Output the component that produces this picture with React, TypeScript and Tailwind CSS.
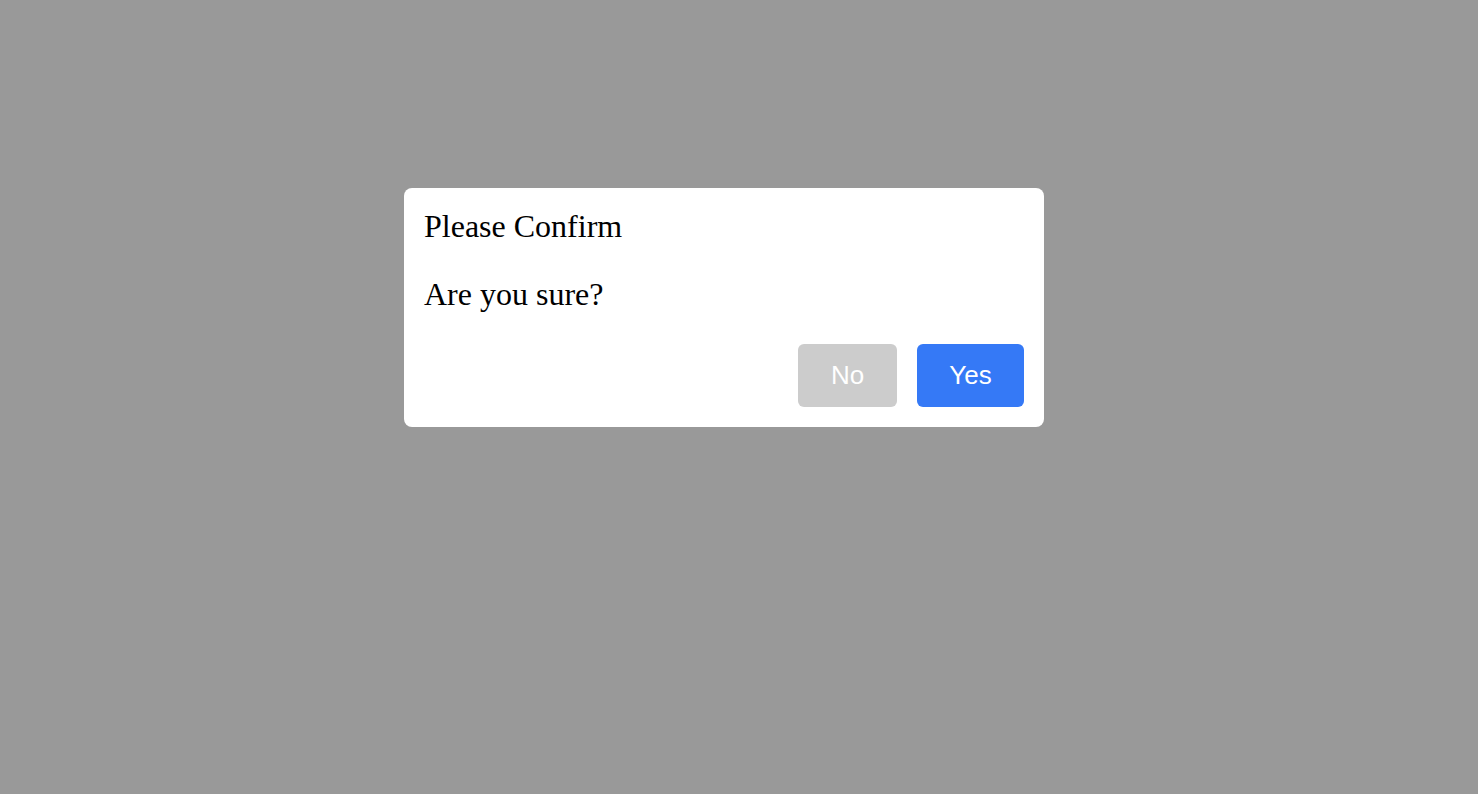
export default function App() {
  return (
    <div className="flex h-[794px] w-full items-start justify-center bg-[#999999] pr-[30px]">
      <div className="mt-[188px] flex w-[640px] flex-col rounded-lg bg-white p-5 font-['Liberation_Serif',serif] text-black">
        <h2 className="text-[32px] leading-[36px]">Please Confirm</h2>
        <p className="mt-[33px] text-[32px] leading-[35px]">Are you sure?</p>
        <div className="mt-8 flex justify-end gap-5 font-['Liberation_Sans',Arial,sans-serif] text-[26px] text-white">
          <button className="h-[63px] w-[99px] rounded-md bg-[#cccccc]">No</button>
          <button className="h-[63px] w-[107px] rounded-md bg-[#3579f6]">Yes</button>
        </div>
      </div>
    </div>
  );
}
